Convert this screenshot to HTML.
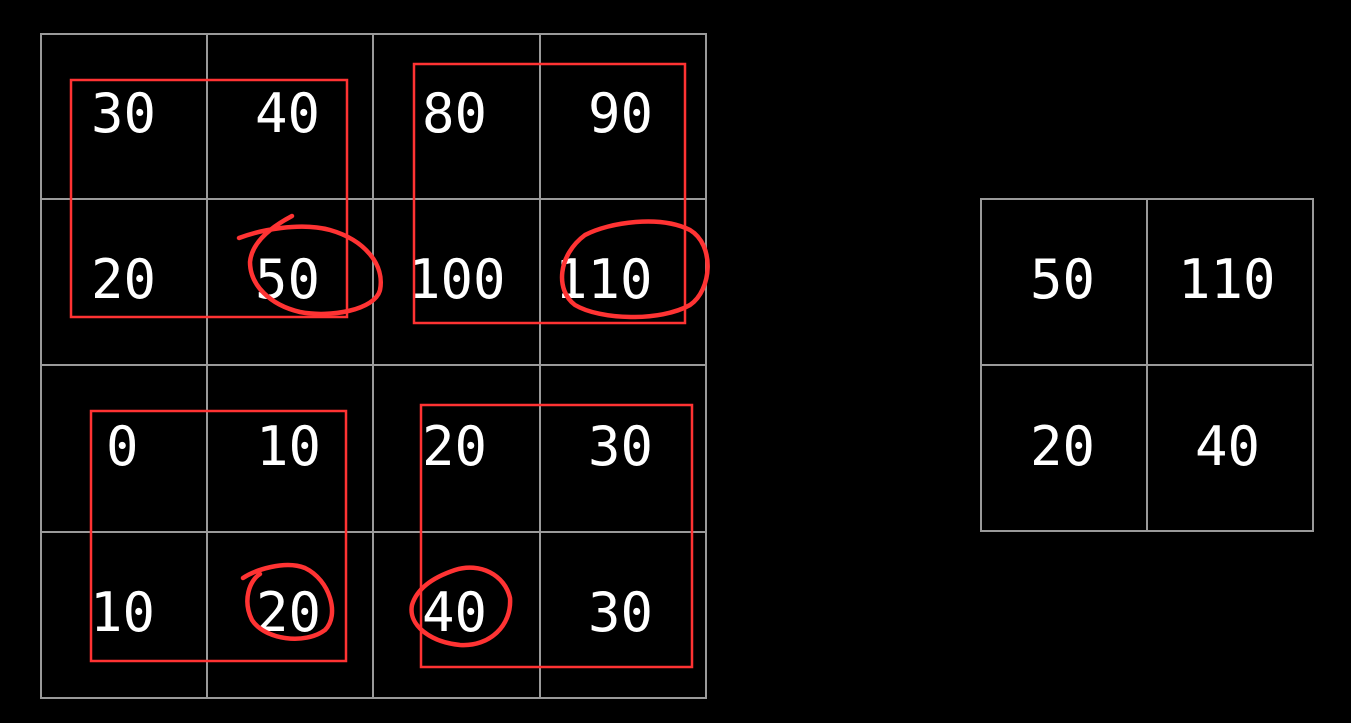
<!DOCTYPE html>
<html><head><style>
html,body{margin:0;padding:0;background:#000;width:1351px;height:723px;overflow:hidden}
text{font-family:"DejaVu Sans Mono","Liberation Mono",monospace;font-size:54px;fill:#fff}
</style></head><body>
<svg width="1351" height="723" viewBox="0 0 1351 723" xmlns="http://www.w3.org/2000/svg">
<g stroke="#9a9a9a" stroke-width="2" fill="none">
<rect x="41" y="34" width="665" height="664"/>
<line x1="207" y1="34" x2="207" y2="698"/><line x1="373" y1="34" x2="373" y2="698"/><line x1="540" y1="34" x2="540" y2="698"/>
<line x1="41" y1="199" x2="706" y2="199"/><line x1="41" y1="365" x2="706" y2="365"/><line x1="41" y1="532" x2="706" y2="532"/>
<rect x="981" y="199" width="332" height="332"/>
<line x1="1147" y1="199" x2="1147" y2="531"/><line x1="981" y1="365" x2="1313" y2="365"/>
</g>
<text x="91" y="132">30</text><text x="255" y="132">40</text><text x="422" y="132">80</text><text x="588" y="132">90</text>
<text x="91" y="298">20</text><text x="255" y="298">50</text><text x="408" y="298">100</text><text x="555" y="298">110</text>
<text x="106" y="465">0</text><text x="256" y="465">10</text><text x="422" y="465">20</text><text x="588" y="465">30</text>
<text x="90" y="631">10</text><text x="256" y="631">20</text><text x="422" y="631">40</text><text x="588" y="631">30</text>
<text x="1030" y="298">50</text><text x="1178" y="298">110</text><text x="1030" y="465">20</text><text x="1195" y="465">40</text>
<g stroke="#f33" stroke-width="2.5" fill="none">
<rect x="71" y="80" width="276" height="237"/>
<rect x="414" y="64" width="271" height="259"/>
<rect x="91" y="411" width="255" height="250"/>
<rect x="421" y="405" width="271" height="262"/>
</g>
<g stroke="#f33" stroke-width="4.5" fill="none" stroke-linecap="round">
<path d="M239 238 C260 230 300 222 330 230 C365 240 385 265 380 290 C375 310 330 318 300 312 C270 305 250 285 250 262 C252 240 275 225 292 216"/>
<path d="M585 235 C610 222 660 215 690 230 C715 245 712 290 690 305 C660 322 600 320 575 305 C555 290 558 255 585 235 Z"/>
<path d="M243 578 C255 570 285 560 305 568 C330 580 340 615 325 630 C305 645 265 640 252 620 C242 600 250 580 260 574"/>
<path d="M455 570 C480 562 505 575 510 598 C512 625 490 647 460 645 C430 642 408 625 412 605 C418 585 440 575 455 570"/>
</g>
</svg>
</body></html>
